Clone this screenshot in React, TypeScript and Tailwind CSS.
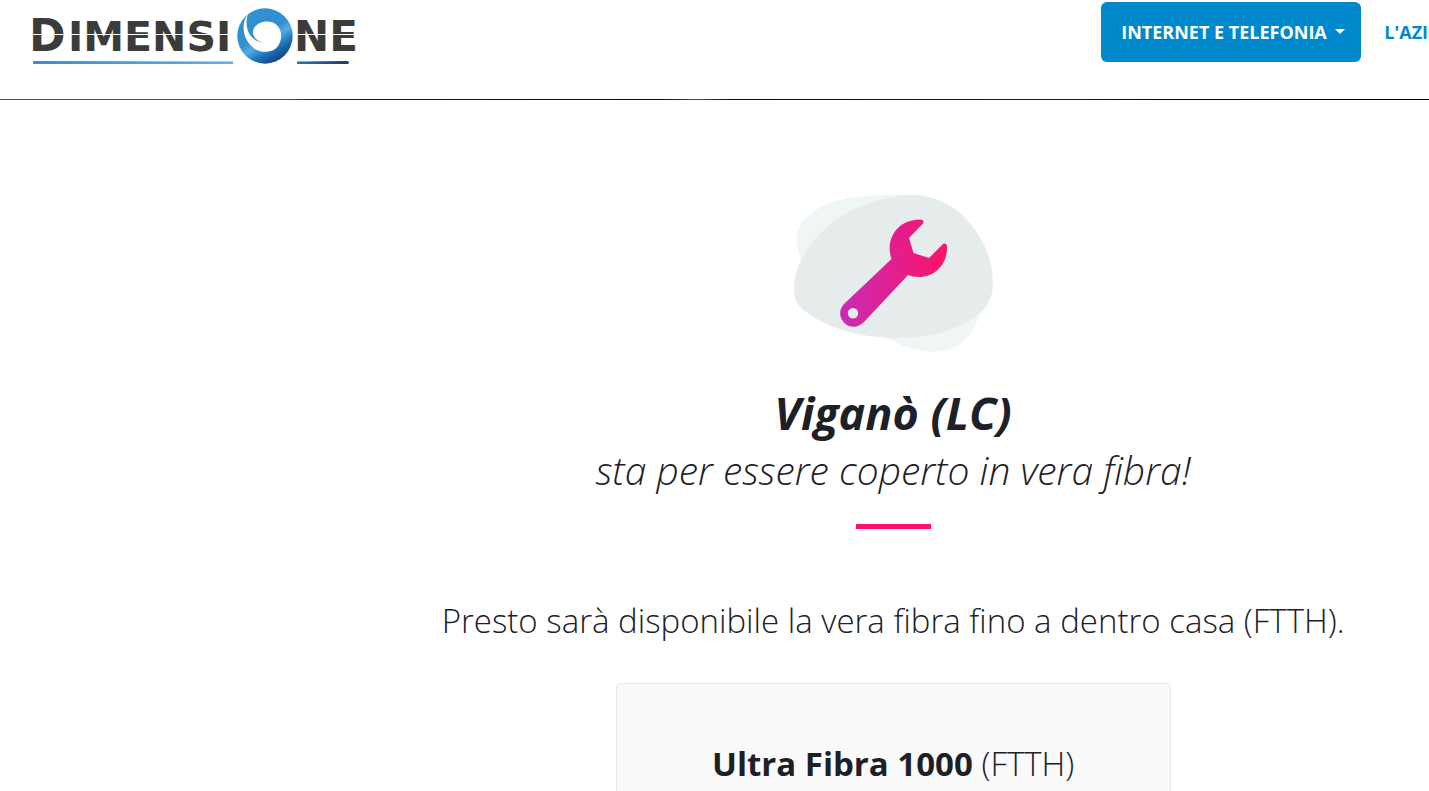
import React from "react";

const Logo = () => (
  <svg width="334" height="60" viewBox="28 6 334 60" role="img" aria-label="Dimensione">
    <defs>
      <linearGradient id="ring" x1="0.2" y1="0" x2="0.8" y2="1">
        <stop offset="0" stopColor="#3490d0" />
        <stop offset="0.45" stopColor="#2f8fd0" />
        <stop offset="0.58" stopColor="#56aae2" />
        <stop offset="0.75" stopColor="#1a72b8" />
        <stop offset="1" stopColor="#1b2f68" />
      </linearGradient>
      <linearGradient id="lineLeft">
        <stop offset="0" stopColor="#3390d0" />
        <stop offset="1" stopColor="#5fb0e6" />
      </linearGradient>
      <linearGradient id="lineRight">
        <stop offset="0" stopColor="#1f78b8" />
        <stop offset="1" stopColor="#263468" />
      </linearGradient>
    </defs>
    <g fill="#3b3b3a" fontFamily="'DejaVu Sans', sans-serif" fontWeight="700">
      <text x="29" y="51" fontSize="44">
        D<tspan x="68" fontSize="41">IMENSI</tspan>
      </text>
      <text x="294" y="51" fontSize="42">NE</text>
    </g>
    <path d="M32 34.5H238M294 34.5H362" stroke="#fff" strokeWidth="1" />
    <circle cx="265" cy="36" r="27.7" fill="url(#ring)" />
    <path
      d="M248 14C240 24 243 42 256 49.500C262 53 273 53 278 46C284 37 281 26 273 22.500C264 19 252 24 253 34C254 38 258 41.500 263 42.500C252 42 243 30 248 14Z"
      fill="#fff"
    />
    <path d="M33 61.500Q33 61 34 61L233 61.500V64H34Q33 64 33 63Z" fill="url(#lineLeft)" />
    <path d="M297 61.500L347 61Q349 61 349 62.500T347 64H297Z" fill="url(#lineRight)" />
  </svg>
);

const WrenchArt = () => (
  <svg width="200" height="158" viewBox="793 194 200 158" aria-hidden="true">
    <defs>
      <linearGradient id="wrench">
        <stop offset="0" stopColor="#c92cb4" />
        <stop offset="1" stopColor="#fb1269" />
      </linearGradient>
    </defs>
    <path
      d="M802 262C793 240 795 225 813 212C835 197 865 194 911 195L979 316C972 338 957 352 933 352C915 351 900 345 884 337Z"
      fill="#f0f6f6"
    />
    <path
      d="M794 289C794 243 850 195 914 195C962 196 993 244 993 283C993 300 985 312 970 320C948 333 925 338 892 338C860 337 834 329 815 318C799 308 794 301 794 289Z"
      fill="#e6ecec"
    />
    <path
      fillRule="evenodd"
      fill="url(#wrench)"
      d="M920 219.500C923.500 219.500 924.500 222 922.500 224L909 238L913.500 253L929 258L942 245C944.500 242.500 947 243.500 947 247C947.500 265 934 277 919 277C914.500 277 911 276 908 275L864 322C858 328 850 328 845 323.500C839 318 838.500 310 844 304L891.500 259C885 241 896 219.500 920 219.500ZM853 308A5.200 5.200 0 1 0 853 318.400A5.200 5.200 0 1 0 853 308Z"
    />
  </svg>
);

export default function App() {
  return (
    <div className="min-h-screen w-full overflow-hidden bg-white font-['Open_Sans',sans-serif] text-[#1d2127]">
      {/* The page is a quarter wider than the window */}
      <div className="w-[125%]">
        <header>
          <div className="flex h-[99px] items-start justify-between pl-7">
            <a href="#" className="pt-[6px]">
              <Logo />
            </a>
            <nav className="flex w-[685px] items-center gap-[3px] pt-[2px] text-lg font-bold whitespace-nowrap text-[#0088cc]">
              <button
                type="button"
                className="flex h-[60px] w-[260px] items-center gap-2 rounded-md bg-[#0088cc] pr-4 pl-5 text-white"
              >
                INTERNET E TELEFONIA
                <svg
                  className="shrink-0"
                  width="10"
                  height="6"
                  viewBox="0 0 10 6"
                  fill="currentColor"
                  aria-hidden="true"
                >
                  <path d="M0 0H10L5 5Z" />
                </svg>
              </button>
              <a href="#" className="px-5">
                L'AZIENDA
              </a>
            </nav>
          </div>
          <div className="h-px bg-[linear-gradient(90deg,#1f4fc4_0%,#1f4fc4_16%,#061b44_18%,#020a20_37%,#1f4fc4_39%,#020a20_41%,#04204a_60%,#020a20_64%,#000_74%)]" />
        </header>

        <main className="flex flex-col items-center pt-[94px] text-center">
          <WrenchArt />
          <h1 className="mt-[33px] text-[39px] leading-[55px] font-light italic">
            <strong className="text-[45px] font-bold">Viganò (LC)</strong>
            <br />
            sta per essere coperto in vera fibra!
          </h1>
          <hr className="mt-[27px] h-[5px] w-[75px] border-0 bg-[#fb1270]" />
          <p className="mt-[65px] text-[33px] leading-[54px] font-light">
            Presto sarà disponibile la vera fibra fino a dentro casa (FTTH).
          </p>
          <section className="mt-[35px] w-[555px] rounded border border-[#e9e9e9] bg-[#fafafa] pt-[53px] pb-12">
            <h2 className="text-[33px] leading-[54px] font-light">
              <strong className="font-bold">Ultra Fibra 1000</strong> (FTTH)
            </h2>
          </section>
        </main>
      </div>
    </div>
  );
}
